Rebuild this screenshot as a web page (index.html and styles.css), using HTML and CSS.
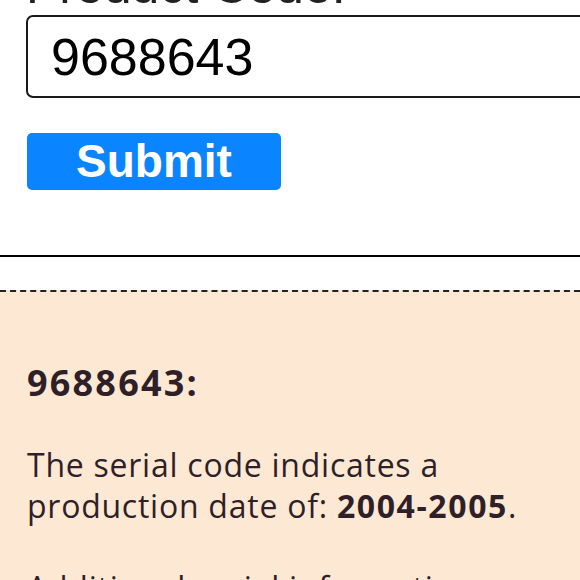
FILE: index.html
```html
<!DOCTYPE html>
<html lang="en">
<head>
<meta charset="utf-8">
<title>Serial Code Lookup</title>
<link rel="stylesheet" href="styles.css">
</head>
<body>
<form class="lookup">
  <label class="lookup-label" for="code">Product Code:</label>
  <input class="lookup-input" id="code" type="text" value="9688643">
  <button class="lookup-submit" type="button">Submit</button>
</form>
<hr class="divider">
<section class="result">
  <h2 class="result-title">9688643:</h2>
  <p class="result-text">The serial code indicates a production date of: <strong>2004-2005</strong>.</p>
  <p class="result-text">Additional serial information</p>
</section>
</body>
</html>
```
FILE: styles.css
```css
html, body {
  margin: 0;
  padding: 0;
  overflow: hidden;
  background: #fff;
}

.lookup {
  display: flex;
  flex-direction: column;
  align-items: flex-start;
  padding-left: 26px;
  font-family: "Liberation Sans", Arial, sans-serif;
}

.lookup-label {
  display: block;
  margin-top: -42px;
  font-size: 50px;
  line-height: 57px;
  color: #222;
}

.lookup-input {
  box-sizing: border-box;
  width: 600px;
  height: 83px;
  margin: 0;
  padding: 0 0 0 23px;
  border: 2px solid #1a1a1a;
  border-radius: 7px;
  font-family: "Liberation Sans", Arial, sans-serif;
  font-size: 52px;
  color: #000;
  background: #fff;
  outline: none;
}

.lookup-submit {
  margin: 35px 0 0 1px;
  height: 57px;
  padding: 0 49px;
  border: 0;
  border-radius: 5px;
  background: #0a84ff;
  color: #fff;
  font-family: "Liberation Sans", Arial, sans-serif;
  font-weight: bold;
  font-size: 46px;
  line-height: 57px;
}

.divider {
  height: 2px;
  margin: 65px 0 33px;
  border: 0;
  background: #000;
}

.result {
  border-top: 2px dashed #222;
  background: #fde9d3;
  padding: 69px 27px 40px;
  color: #2f1f28;
  font-family: "Open Sans", "Noto Sans", sans-serif;
}

.result-title {
  margin: 0 0 39px;
  font-size: 36px;
  line-height: 44px;
  font-weight: 700;
  letter-spacing: 2.2px;
}

.result-text {
  margin: 0 0 41px;
  font-size: 32px;
  line-height: 41px;
  letter-spacing: 0.75px;
}

.result-text strong {
  font-weight: 700;
  letter-spacing: 1.6px;
}
```
